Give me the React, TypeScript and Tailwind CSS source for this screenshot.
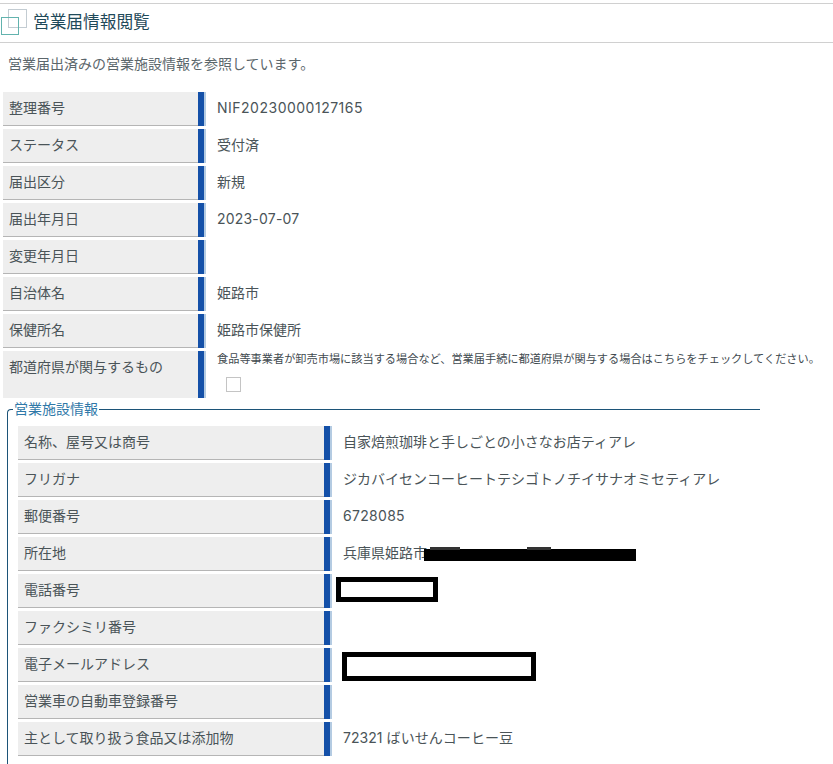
const rows = [
  ["整理番号", "NIF20230000127165", "tracking-[0.5px]"],
  ["ステータス", "受付済", ""],
  ["届出区分", "新規", ""],
  ["届出年月日", "2023-07-07", "tracking-[0.2px]"],
  ["変更年月日", "", ""],
  ["自治体名", "姫路市", ""],
  ["保健所名", "姫路市保健所", ""],
];

const facilityRows = [
  ["名称、屋号又は商号", "自家焙煎珈琲と手しごとの小さなお店ティアレ", ""],
  ["フリガナ", "ジカバイセンコーヒートテシゴトノチイサナオミセティアレ", ""],
  ["郵便番号", "6728085", "tracking-[0.3px]"],
  ["所在地", "兵庫県姫路市", ""],
  ["電話番号", "", ""],
  ["ファクシミリ番号", "", ""],
  ["電子メールアドレス", "", ""],
  ["営業車の自動車登録番号", "", ""],
  ["主として取り扱う食品又は添加物", "72321 ばいせんコーヒー豆", "tracking-[0.05px]"],
];

function Label({ text, width }: { text: string; width: string }) {
  return (
    <div className={`${width} shrink-0 flex items-center pl-[6px] pb-[3px] bg-[#eeeeee] border-b border-[#b5b5b5] text-[14px] text-[#4a5458]`}>
      {text}
    </div>
  );
}

function Bar() {
  return <div className="w-[8px] shrink-0 border-l-[6px] border-[#1450a8] bg-[#b4cbe2]" />;
}

export default function App() {
  return (
    <div className="relative w-[833px] h-[764px] overflow-hidden bg-white font-['Inter','Noto_Sans_CJK_JP','Liberation_Sans',sans-serif]">
      <div className="mt-[3px] h-[40px] border-y border-[#d0d0d0] flex items-center pl-[33px] relative">
        <svg className="absolute left-0 top-[5px]" width="27" height="28" viewBox="0 0 27 28" fill="none">
          <rect x="8.5" y="0.5" width="18" height="18" stroke="#c3ccd2" />
          <rect x="1.5" y="8.5" width="17" height="17" stroke="#62b3ae" />
        </svg>
        <span className="text-[16.7px] text-[#1f4a5a]">営業届情報閲覧</span>
      </div>
      <p className="mt-[11px] pl-[8px] text-[14px] leading-[20px] text-[#5b666b]">
        営業届出済みの営業施設情報を参照しています。
      </p>
      <div className="mt-[18px] pl-[3px] flex flex-col gap-[3px]">
        {rows.map(([label, value, spacing]) => (
          <div key={label} className="flex h-[34px]">
            <Label text={label} width="w-[195px]" />
            <Bar />
            <div className={`${spacing} pl-[11px] pb-[3px] flex items-center text-[14px] text-[#4a5458]`}>{value}</div>
          </div>
        ))}
        <div className="flex h-[47px]">
          <div className="w-[195px] shrink-0 pl-[6px] pt-[6px] bg-[#eeeeee] text-[14px] leading-[20px] text-[#4a5458]">
            都道府県が関与するもの
          </div>
          <Bar />
          <div className="pl-[11px]">
            <div className="-mt-[1px] text-[11.2px] leading-[18px] text-[#3f4a4f] whitespace-nowrap">
              食品等事業者が卸売市場に該当する場合など、営業届手続に都道府県が関与する場合はこちらをチェックしてください。
            </div>
            <div className="ml-[9px] mt-[9px] w-[15px] h-[15px] border border-[#c4c4c4]" />
          </div>
        </div>
      </div>
      <fieldset className="ml-[7px] mt-[3px] w-[753px] h-[400px] border-t border-l border-[#1c5378] rounded-tl-[4px]">
        <legend className="ml-[5px] px-[1px] text-[14px] leading-[16px] text-[#2f78a8]">営業施設情報</legend>
        <div className="mt-[9px] pl-[10px] flex flex-col gap-[3px]">
          {facilityRows.map(([label, value, spacing]) => (
            <div key={label} className="flex h-[34px]">
              <Label text={label} width="w-[306px]" />
              <Bar />
              <div className={`${spacing} pl-[11px] pb-[3px] flex items-center text-[14px] text-[#4a5458] whitespace-nowrap`}>{value}</div>
            </div>
          ))}
        </div>
      </fieldset>
      {/* redaction marks drawn over the screenshot */}
      <div className="absolute left-[424px] top-[549px] w-[212px] h-[12px] bg-black" />
      <div className="absolute left-[430px] top-[547px] w-[30px] h-[3px] bg-[#333333]" />
      <div className="absolute left-[527px] top-[547px] w-[24px] h-[3px] bg-[#333333]" />
      <div className="absolute left-[336px] top-[577px] w-[102px] h-[25px] border-[5px] border-black bg-white" />
      <div className="absolute left-[342px] top-[652px] w-[194px] h-[29px] border-[5px] border-black bg-white" />
    </div>
  );
}
